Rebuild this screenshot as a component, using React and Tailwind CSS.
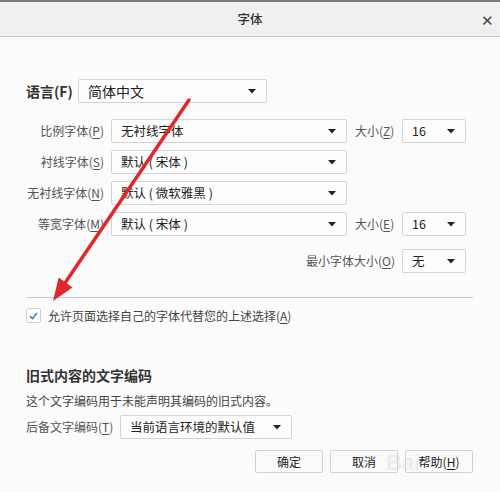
import React from 'react';

const font = { fontFamily: '"Noto Sans CJK SC", "Noto Sans", sans-serif' };

const Caret = () => (
  <svg width="8" height="5" viewBox="0 0 8 5" className="shrink-0">
    <path d="M0 0 L8 0 L4 4.5 Z" fill="#222" />
  </svg>
);

const Select = ({ value, className, big }) => (
  <div
    className={`flex h-[24px] shrink-0 items-center justify-between whitespace-nowrap rounded-[2px] border border-[#d4d4d4] bg-[#fdfdfd] pl-[9px] pr-[10px] leading-none text-[#222] ${
      big ? 'text-[14px]' : 'text-[12.5px]'
    } ${className}`}
  >
    <span>{value}</span>
    <Caret />
  </div>
);

const Key = ({ k }) => <span className="underline underline-offset-2">{k}</span>;

const Label = ({ text, k, className }) => (
  <div className={`shrink-0 whitespace-nowrap text-[12px] leading-none text-[#555] ${className}`}>
    {text}(<Key k={k} />)
  </div>
);

const fontRows = [
  { label: '比例字体', k: 'P', value: '无衬线字体', size: { label: '大小', k: 'Z', value: '16' } },
  { label: '衬线字体', k: 'S', value: '默认 ( 宋体 )' },
  { label: '无衬线字体', k: 'N', value: '默认 ( 微软雅黑 )' },
  { label: '等宽字体', k: 'M', value: '默认 ( 宋体 )', size: { label: '大小', k: 'E', value: '16' } },
];

const Button = ({ children }) => (
  <div className="flex h-[23px] w-[68px] items-center justify-center whitespace-nowrap rounded-[2px] border border-[#d2d2d2] bg-[#fbfbfb] text-[12px] leading-none text-[#222]">
    {children}
  </div>
);

export default function App() {
  return (
    <div className="relative h-[492px] w-[500px] overflow-hidden bg-[#fbfbfb]" style={font}>
      {/* title bar */}
      <div className="flex h-[37px] items-center justify-center border-t-2 border-b border-t-[#7a7a7a] border-b-[#c9c9c9] bg-[#f0f0f0]">
        <span className="text-[12.5px] font-medium text-[#333]">字体</span>
        <span className="absolute right-[6px] top-[9px] text-[15px] text-[#444]">✕</span>
      </div>

      <div className="flex flex-col pl-[26px] pr-[27px]">
        {/* language */}
        <div className="mt-[42px] flex items-center gap-[7px]">
          <div className="w-[45px] shrink-0 whitespace-nowrap text-[14px] font-bold leading-none text-[#333]">语言(F)</div>
          <Select value="简体中文" big className="h-[23px] w-[189px]" />
        </div>

        {/* fonts */}
        <div className="mt-[16px] flex flex-col gap-[7px]">
          {fontRows.map((r) => (
            <div key={r.k} className="flex items-center">
              <Label text={r.label} k={r.k} className="w-[78px] text-right" />
              <Select value={r.value} className="ml-[7px] w-[236px]" />
              {r.size && (
                <>
                  <Label text={r.size.label} k={r.size.k} className="ml-[8px] w-[40px]" />
                  <Select value={r.size.value} className="ml-[7px] w-[64px]" />
                </>
              )}
            </div>
          ))}
        </div>

        <div className="mt-[13px] flex items-center">
          <Label text="最小字体大小" k="O" className="w-[369px] text-right" />
          <Select value="无" className="ml-[7px] w-[64px]" />
        </div>

        <div className="mt-[24px] h-px w-[447px] bg-[#c8c8c8]" />

        <div className="mt-[10px] flex items-center gap-[7px]">
          <div className="flex h-[15px] w-[15px] items-center justify-center rounded-[2px] border border-[#cfcfcf] bg-white">
            <svg width="9" height="8" viewBox="0 0 9 8">
              <path d="M1 4.2 L3.5 6.6 L8 1" fill="none" stroke="#2f7fc4" strokeWidth="1.5" />
            </svg>
          </div>
          <span className="whitespace-nowrap text-[12px] leading-none text-[#444]">
            允许页面选择自己的字体代替您的上述选择(<Key k="A" />)
          </span>
        </div>

        <div className="mt-[44px] whitespace-nowrap text-[14px] font-bold leading-[16px] text-[#333]">旧式内容的文字编码</div>
        <div className="mt-[10px] whitespace-nowrap text-[12px] leading-[16px] text-[#444]">
          这个文字编码用于未能声明其编码的旧式内容。
        </div>

        <div className="mt-[6px] flex items-center">
          <Label text="后备文字编码" k="T" className="w-[86px]" />
          <Select value="当前语言环境的默认值" className="ml-[8px] h-[23px] w-[172px]" />
        </div>

        <div className="mt-[11px] flex justify-end gap-[7px]">
          <Button>确定</Button>
          <Button>取消</Button>
          <Button>
            帮助(<Key k="H" />)
          </Button>
        </div>
      </div>

      {/* faint watermark over the buttons */}
      <div className="pointer-events-none absolute left-[386px] top-[452px] flex items-end text-[#d6d6d6] opacity-40">
        <span className="text-[22px] font-bold leading-none" style={{ fontFamily: '"Liberation Sans", sans-serif' }}>
          Bai
        </span>
      </div>

      {/* red annotation arrow */}
      <svg className="pointer-events-none absolute left-0 top-0" width="500" height="492">
        <line x1="189" y1="100" x2="63" y2="286" stroke="#e0282a" strokeWidth="3.5" strokeLinecap="round" />
        <path d="M53 301 L58.7 277.5 L72.5 287.5 Z" fill="#e0282a" />
      </svg>
    </div>
  );
}
